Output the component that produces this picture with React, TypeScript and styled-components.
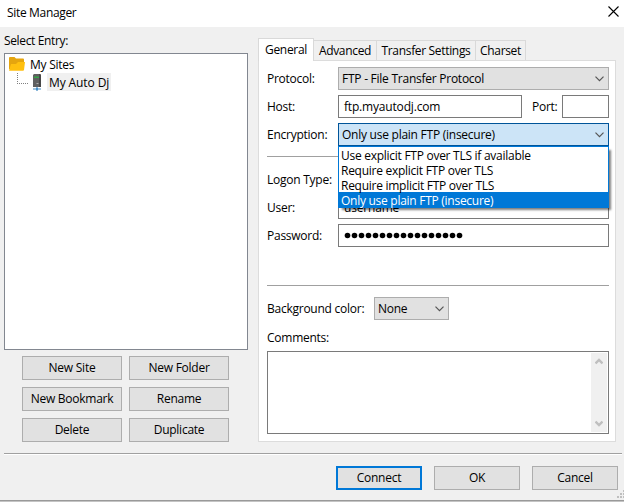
import styled, { createGlobalStyle, css } from "styled-components";

const protocolRow = "FTP - File Transfer Protocol";

const encryptionOptions = [
    "Use explicit FTP over TLS if available",
    "Require explicit FTP over TLS",
    "Require implicit FTP over TLS",
    "Only use plain FTP (insecure)",
];

const entryActions = [
    "New Site",
    "New Folder",
    "New Bookmark",
    "Rename",
    "Delete",
    "Duplicate",
];

const tabs = [
    { label: "General", width: 56, active: true },
    { label: "Advanced", width: 63 },
    { label: "Transfer Settings", width: 99 },
    { label: "Charset", width: 50 },
];

export default function App() {
    return (
        <Window>
            <GlobalStyle />
            <TitleBar>
                <span>Site Manager</span>
                <CloseIcon />
            </TitleBar>

            <Content>
                <EntryColumn>
                    <EntryLabel>Select Entry:</EntryLabel>
                    <Tree>
                        <TreeRow>
                            <FolderIcon />
                            <TreeLabel>My Sites</TreeLabel>
                        </TreeRow>
                        <TreeRow $nested>
                            <TreeLine />
                            <ServerIcon />
                            <TreeLabel $selected>My Auto Dj</TreeLabel>
                        </TreeRow>
                    </Tree>
                    <EntryActions>
                        {entryActions.map(action => (
                            <Button key={action}>{action}</Button>
                        ))}
                    </EntryActions>
                </EntryColumn>

                <Notebook>
                    <TabList>
                        {tabs.map(tab => (
                            <Tab key={tab.label} $width={tab.width} $active={tab.active}>
                                {tab.label}
                            </Tab>
                        ))}
                    </TabList>
                    <TabPanel>
                        <Field>
                            <Label>Protocol:</Label>
                            <Select $width={271}>
                                {protocolRow}
                                <ChevronIcon />
                            </Select>
                        </Field>
                        <Field>
                            <Label>Host:</Label>
                            <TextBox $width={184}>ftp.myautodj.com</TextBox>
                            <PortLabel>Port:</PortLabel>
                            <TextBox $width={47} />
                        </Field>
                        <Field>
                            <Label>Encryption:</Label>
                            <Select $width={271} $open>
                                Only use plain FTP (insecure)
                                <ChevronIcon />
                                <Options>
                                    {encryptionOptions.map((option, index) => (
                                        <Option key={option} $selected={index === 3}>
                                            {option}
                                        </Option>
                                    ))}
                                </Options>
                            </Select>
                        </Field>
                        <Separator $top={5} $bottom={11} />
                        <Field>
                            <Label>Logon Type:</Label>
                            <Select $width={271} />
                        </Field>
                        <Field>
                            <Label>User:</Label>
                            <TextBox $width={271}>username</TextBox>
                        </Field>
                        <Field>
                            <Label>Password:</Label>
                            <TextBox $width={271}>
                                <PasswordDots />
                            </TextBox>
                        </Field>
                        <Separator $top={33} $bottom={11} />
                        <Field>
                            <Label $wide>Background color:</Label>
                            <Select $width={75}>
                                None
                                <ChevronIcon />
                            </Select>
                        </Field>
                        <CommentsLabel>Comments:</CommentsLabel>
                        <Comments>
                            <ScrollBar>
                                <ScrollArrow />
                                <ScrollArrow $down />
                            </ScrollBar>
                        </Comments>
                    </TabPanel>
                </Notebook>
            </Content>

            <Footer>
                <Button $width={86} $primary>
                    Connect
                </Button>
                <Button $width={86}>OK</Button>
                <Button $width={86}>Cancel</Button>
                <SizeGrip />
            </Footer>
        </Window>
    );
}

function CloseIcon() {
    return (
        <svg width="11" height="11" viewBox="0 0 11 11">
            <path d="M0.5 0.5l10 10M10.5 0.5l-10 10" stroke="#000" strokeWidth="1.1" />
        </svg>
    );
}

function FolderIcon() {
    return (
        <svg width="16" height="14" viewBox="0 0 16 14">
            <path d="M0 1q0-1 1-1h4.5l1.5 1.5h7q1 0 1 1V12H0z" fill="#e5a50f" />
            <path d="M0 13.5L2 7h5l2-2h7L15 13q-.2.8-1 .8H1q-.8 0-1-.3z" fill="#ffc010" />
        </svg>
    );
}

function ServerIcon() {
    return (
        <svg width="10" height="17" viewBox="0 0 10 17">
            <path d="M1 1l1-1h6l1 1v12H1z" fill="#606060" />
            <path d="M7 0h1l1 1v12H7z" fill="#484848" />
            <path d="M2 2.5h5V4H2z" fill="#35a548" />
            <path d="M4.5 9.5h2" stroke="#aaa" />
            <path d="M5 13v4M1 15h8" stroke="#438bc4" strokeWidth="1.2" />
            <rect x="4" y="14" width="2" height="2" fill="#4a91c9" />
        </svg>
    );
}

function TreeLine() {
    return (
        <svg width="12" height="18" viewBox="0 0 12 18">
            <path
                d="M0.5 0v10M0 10.5h12"
                stroke="#808080"
                strokeDasharray="1 1"
                fill="none"
                shapeRendering="crispEdges"
            />
        </svg>
    );
}

function ChevronIcon() {
    return (
        <svg width="9" height="6" viewBox="0 0 9 6">
            <path d="M0.5 0.7l4 4 4-4" stroke="#555" strokeWidth="1.2" fill="none" />
        </svg>
    );
}

function PasswordDots() {
    return (
        <svg width="120" height="7" viewBox="0 0 120 7">
            {Array.from({ length: 17 }, (_, index) => (
                <circle key={index} cx={3.5 + index * 7} cy="3.5" r="2.8" />
            ))}
        </svg>
    );
}

function ScrollArrow({ $down }: { $down?: boolean }) {
    return (
        <svg width="8" height="7" viewBox="0 0 8 7">
            <path
                d={$down ? "M0.5 1.5L4 5l3.5-3.5" : "M0.5 5.5L4 2l3.5 3.5"}
                stroke="#bfbfbf"
                strokeWidth="2.4"
                fill="none"
            />
        </svg>
    );
}

function SizeGrip() {
    return (
        <Grip width="8" height="8" viewBox="0 0 8 8" fill="#bfbfbf">
            <path d="M0 6h2v2H0zM3 6h2v2H3zM6 6h2v2H6zM3 3h2v2H3zM6 3h2v2H6zM6 0h2v2H6z" />
        </Grip>
    );
}

const GlobalStyle = createGlobalStyle`
    * {
        box-sizing: border-box;
    }

    body {
        margin: 0;
        overflow: hidden;
        font: 12px/16px "Open Sans", "Noto Sans", sans-serif;
        letter-spacing: -0.25px;
        color: #000;
    }

    svg {
        display: block;
        flex: none;
    }
`;

const Window = styled.div`
    position: relative;
    display: flex;
    flex-direction: column;
    width: 624px;
    height: 502px;
    background: #f0f0f0;
    border-bottom: 1px solid #c4c4c4;
    box-shadow: inset 0 -1px #999;
    white-space: nowrap;
`;

const TitleBar = styled.header`
    display: flex;
    flex: none;
    justify-content: space-between;
    height: 27px;
    padding: 5px 5px 0 7px;
    letter-spacing: -0.33px;
    background: #fff;

    svg {
        margin-top: 1px;
    }
`;

const Content = styled.main`
    display: flex;
    flex: none;
    gap: 10px;
    height: 426px;
    padding-left: 4px;
`;

const EntryColumn = styled.section`
    width: 244px;
    padding-top: 6px;
`;

const EntryLabel = styled.div`
    height: 20px;
    letter-spacing: -0.35px;
`;

const Tree = styled.div`
    height: 297px;
    padding: 1px 4px;
    background: #fff;
    border: 1px solid #828790;
`;

const TreeRow = styled.div<{ $nested?: boolean }>`
    display: flex;
    align-items: center;
    gap: 3px;
    height: 18px;
    padding-left: ${props => (props.$nested ? "8px" : 0)};
`;

const TreeLabel = styled.span<{ $selected?: boolean }>`
    height: 18px;
    padding: 2px 2px 0;
    margin-left: ${props => (props.$selected ? "2px" : 0)};
    letter-spacing: ${props => (props.$selected ? "-0.1px" : "inherit")};
    line-height: 15px;
    background: ${props => (props.$selected ? "#f0f0f0" : "none")};
`;

const EntryActions = styled.div`
    display: grid;
    grid-template-columns: 100px 100px;
    gap: 7px;
    padding: 6px 18px;
`;

const Button = styled.button<{ $width?: number; $primary?: boolean }>`
    width: ${props => (props.$width ? `${props.$width}px` : "100%")};
    height: 24px;
    padding: 0;
    font: inherit;
    letter-spacing: inherit;
    color: #000;
    background: #e1e1e1;
    border: ${props => (props.$primary ? "2px solid #0078d7" : "1px solid #adadad")};
`;

const Notebook = styled.section`
    width: 358px;
    padding-top: 11px;
`;

const TabList = styled.div`
    display: flex;
    align-items: flex-end;
    height: 22px;
    letter-spacing: -0.33px;
`;

const Tab = styled.div<{ $width: number; $active?: boolean }>`
    display: flex;
    flex: none;
    align-items: center;
    justify-content: center;
    width: ${props => props.$width}px;
    height: 20px;
    padding-top: 1px;
    border: 1px solid #d9d9d9;
    border-width: 1px 1px 0 0;

    ${props =>
        props.$active &&
        css`
            z-index: 1;
            height: 23px;
            padding: 0 0 1px;
            margin-bottom: -1px;
            background: #fff;
            border-left-width: 1px;
        `}
`;

const TabPanel = styled.div`
    display: flex;
    flex-direction: column;
    height: 382px;
    padding: 6px 6px 0 8px;
    background: #fff;
    border: 1px solid #dcdcdc;
`;

const Field = styled.div`
    display: flex;
    align-items: center;
    height: 23px;
    margin-bottom: 5px;
`;

const Label = styled.label<{ $wide?: boolean }>`
    width: ${props => (props.$wide ? 107 : 71)}px;
    padding-bottom: 1px;
    margin-top: 1px;
`;

const PortLabel = styled.label`
    width: 40px;
    padding-left: 10px;
`;

const Box = styled.div<{ $width: number }>`
    position: relative;
    display: flex;
    flex: none;
    align-items: center;
    width: ${props => props.$width}px;
    height: 23px;
`;

const TextBox = styled(Box)`
    padding-left: 5px;
    letter-spacing: -0.18px;
    border: 1px solid #7a7a7a;
`;

const Select = styled(Box)<{ $open?: boolean }>`
    justify-content: space-between;
    padding: 1px 4px 0 3px;
    background: ${props => (props.$open ? "#cce4f7" : "#e1e1e1")};
    border: 1px solid ${props => (props.$open ? "#005499" : "#adadad")};
`;

const Options = styled.div`
    position: absolute;
    top: 22px;
    left: -1px;
    z-index: 2;
    width: 271px;
    background: #fff;
    border: 1px solid #0078d7;
    box-shadow: 3px 3px 2px -1px rgba(0, 0, 0, 0.5);
`;

const Option = styled.div<{ $selected?: boolean }>`
    height: 15px;
    padding-left: 2px;
    line-height: 17px;
    letter-spacing: -0.27px;
    color: ${props => (props.$selected ? "#fff" : "#000")};
    background: ${props => (props.$selected ? "#0078d7" : "#fff")};
`;

const Separator = styled.div<{ $top: number; $bottom: number }>`
    flex: none;
    height: 1px;
    margin: ${props => props.$top}px 0 ${props => props.$bottom}px;
    background: #a0a0a0;
`;

const CommentsLabel = styled.div`
    height: 26px;
    padding-top: 5px;
`;

const Comments = styled.div`
    display: flex;
    justify-content: flex-end;
    height: 83px;
    padding: 1px;
    border: 1px solid #7a7a7a;
`;

const ScrollBar = styled.div`
    display: flex;
    flex-direction: column;
    align-items: center;
    justify-content: space-between;
    width: 16px;
    padding: 5px 0;
    background: #f0f0f0;
`;

const Footer = styled.footer`
    display: flex;
    flex: 1;
    gap: 12px;
    justify-content: flex-end;
    padding: 12px 4px 0 0;
    margin: 0 2px 0 4px;
    border-top: 1px solid #a0a0a0;
    box-shadow: inset 0 1px #fff;
`;

const Grip = styled.svg`
    position: absolute;
    right: -1px;
    bottom: 3px;
`;
